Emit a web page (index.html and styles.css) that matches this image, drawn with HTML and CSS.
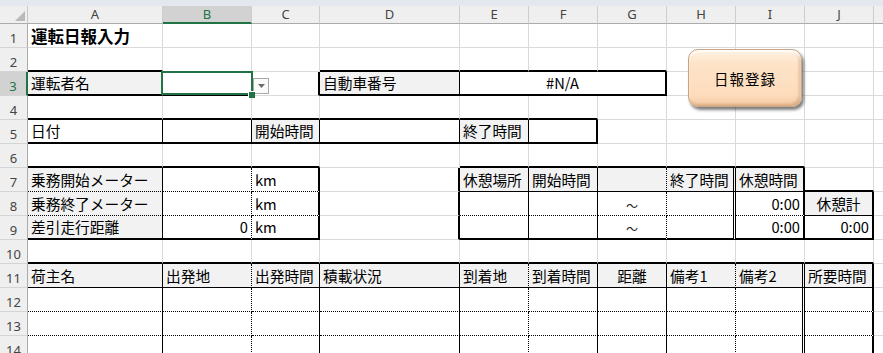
FILE: index.html
```html
<!DOCTYPE html>
<html lang="ja">
<head>
<meta charset="utf-8">
<title>運転日報入力</title>
<link rel="stylesheet" href="styles.css">
</head>
<body>
<div class="app">
  <div class="topbar"></div>
  <div class="sheet">
    <!-- column headers -->
    <div class="corner"><svg width="10" height="10" viewBox="0 0 10 10"><path d="M10 0V10H0Z" fill="#b9b9b9"/></svg></div>
    <div class="ch">A</div><div class="ch sel">B</div><div class="ch">C</div><div class="ch">D</div><div class="ch">E</div><div class="ch">F</div><div class="ch">G</div><div class="ch">H</div><div class="ch">I</div><div class="ch">J</div><div class="ch"></div>

    <!-- row 1 -->
    <div class="rh">1</div>
    <div class="c title">運転日報入力</div><div class="c"></div><div class="c"></div><div class="c"></div><div class="c"></div><div class="c"></div><div class="c"></div><div class="c"></div><div class="c"></div><div class="c"></div><div class="c"></div>

    <!-- row 2 -->
    <div class="rh">2</div>
    <div class="c bt"></div><div class="c"></div><div class="c"></div><div class="c bt"></div><div class="c bt"></div><div class="c bt"></div><div class="c bt"></div><div class="c"></div><div class="c"></div><div class="c"></div><div class="c"></div>

    <!-- row 3 -->
    <div class="rh sel">3</div>
    <div class="c g bt">運転者名</div>
    <div class="c bt active"></div>
    <div class="c rt host"><span class="dropdown"><svg width="7" height="4" viewBox="0 0 7 4"><path d="M0 0H7L3.5 4Z" fill="#6a6a6a"/></svg></span></div>
    <div class="c g rs bt">自動車番号</div>
    <div class="c span3 ctr rt bt">#N/A</div>
    <div class="c"></div><div class="c"></div><div class="c"></div><div class="c"></div>

    <!-- row 4 -->
    <div class="rh">4</div>
    <div class="c bt"></div><div class="c bt"></div><div class="c bt"></div><div class="c bt"></div><div class="c bt"></div><div class="c bt"></div><div class="c"></div><div class="c"></div><div class="c"></div><div class="c"></div><div class="c"></div>

    <!-- row 5 -->
    <div class="rh">5</div>
    <div class="c rs bt">日付</div><div class="c rs bt"></div><div class="c g rs bt">開始時間</div><div class="c rs bt"></div><div class="c g rs bt">終了時間</div><div class="c rt bt"></div><div class="c"></div><div class="c"></div><div class="c"></div><div class="c"></div><div class="c"></div>

    <!-- row 6 -->
    <div class="rh">6</div>
    <div class="c bt"></div><div class="c bt"></div><div class="c bt"></div><div class="c"></div><div class="c bt"></div><div class="c bt"></div><div class="c bt"></div><div class="c bt"></div><div class="c bt"></div><div class="c"></div><div class="c"></div>

    <!-- row 7 -->
    <div class="rh">7</div>
    <div class="c g rs bd">乗務開始メーター</div><div class="c rd bd"></div><div class="c rt bd">km</div><div class="c rt"></div>
    <div class="c g rs bs">休憩場所</div><div class="c g rs bs">開始時間</div><div class="c g rd bs"></div><div class="c g rw bs">終了時間</div><div class="c g rt bs">休憩時間</div><div class="c bt"></div><div class="c"></div>

    <!-- row 8 -->
    <div class="rh">8</div>
    <div class="c g rs bd">乗務終了メーター</div><div class="c rd bd"></div><div class="c rt bd">km</div><div class="c rt"></div>
    <div class="c rs bd"></div><div class="c rs bd"></div><div class="c ctr rd bd tilde">～</div><div class="c rw bd"></div><div class="c num rt bd">0:00</div><div class="c g ctr rt bs">休憩計</div><div class="c"></div>

    <!-- row 9 -->
    <div class="rh">9</div>
    <div class="c g rs bt">差引走行距離</div><div class="c num rd bt">0</div><div class="c rt bt">km</div><div class="c rt"></div>
    <div class="c rs bt"></div><div class="c rs bt"></div><div class="c ctr rd bt tilde">～</div><div class="c rw bt"></div><div class="c num rt bt">0:00</div><div class="c num rt bt">0:00</div><div class="c"></div>

    <!-- row 10 -->
    <div class="rh">10</div>
    <div class="c bt"></div><div class="c bt"></div><div class="c bt"></div><div class="c bt"></div><div class="c bt"></div><div class="c bt"></div><div class="c bt"></div><div class="c bt"></div><div class="c bt"></div><div class="c bt"></div><div class="c"></div>

    <!-- row 11 -->
    <div class="rh">11</div>
    <div class="c g rs bs">荷主名</div><div class="c g rd bs">出発地</div><div class="c g rs bs">出発時間</div><div class="c g rs bs">積載状況</div><div class="c g rd bs">到着地</div><div class="c g rs bs">到着時間</div><div class="c g ctr rs bs">距離</div><div class="c g rd bs">備考1</div><div class="c g rw bs">備考2</div><div class="c g rt bs">所要時間</div><div class="c"></div>

    <!-- row 12 -->
    <div class="rh">12</div>
    <div class="c rs bd"></div><div class="c rd bd"></div><div class="c rs bd"></div><div class="c rs bd"></div><div class="c rd bd"></div><div class="c rs bd"></div><div class="c rs bd"></div><div class="c rd bd"></div><div class="c rw bd"></div><div class="c rt bd"></div><div class="c"></div>

    <!-- row 13 -->
    <div class="rh">13</div>
    <div class="c rs bd"></div><div class="c rd bd"></div><div class="c rs bd"></div><div class="c rs bd"></div><div class="c rd bd"></div><div class="c rs bd"></div><div class="c rs bd"></div><div class="c rd bd"></div><div class="c rw bd"></div><div class="c rt bd"></div><div class="c"></div>

    <!-- row 14 -->
    <div class="rh">14</div>
    <div class="c rs bd"></div><div class="c rd bd"></div><div class="c rs bd"></div><div class="c rs bd"></div><div class="c rd bd"></div><div class="c rs bd"></div><div class="c rs bd"></div><div class="c rd bd"></div><div class="c rw bd"></div><div class="c rt bd"></div><div class="c"></div>
  </div>

  <button class="btn" type="button">日報登録</button>
</div>
</body>
</html>
```

FILE: styles.css
```css
* { box-sizing: border-box; }

html, body {
  margin: 0;
  padding: 0;
  background: #fff;
}

body {
  width: 883px;
  height: 353px;
  overflow: hidden;
  font-family: "Noto Sans CJK JP", "Noto Sans", sans-serif;
  color: #000;
}

.app {
  position: relative;
  width: 883px;
  height: 353px;
  overflow: hidden;
}

.topbar {
  height: 6px;
  background: #e3e8ef;
}

.sheet {
  display: grid;
  grid-template-columns: 28px 135px 89px 68px 140px repeat(7, 69px);
  grid-template-rows: 18px repeat(14, 24px);
  width: 943px;
}

/* headers */
.corner {
  background: #efefef;
  border-right: 1px solid #c8c8c8;
  border-bottom: 1px solid #ababab;
  display: flex;
  align-items: flex-end;
  justify-content: flex-end;
  padding: 0 2px 2px 0;
}

.ch {
  background: #efefef;
  border-right: 1px solid #cdcdcd;
  border-bottom: 1px solid #ababab;
  font: 13px "Noto Sans", "Liberation Sans", sans-serif;
  color: #444;
  display: flex;
  align-items: center;
  justify-content: center;
  line-height: 1;
}

.ch.sel {
  background: #d2d2d2;
  color: #217346;
  border-bottom: 2px solid #217346;
}

.rh {
  background: #efefef;
  border-right: 1px solid #ababab;
  border-bottom: 1px solid #d4d4d4;
  font: 13px "Noto Sans", "Liberation Sans", sans-serif;
  color: #444;
  display: flex;
  align-items: flex-end;
  justify-content: center;
  padding-bottom: 2px;
  line-height: 1;
}

.rh.sel {
  background: #d2d2d2;
  color: #217346;
  border-right: 2px solid #217346;
}

/* cells */
.c {
  border-right: 1px solid #dadada;
  border-bottom: 1px solid #dadada;
  font-size: 14.7px;
  line-height: 1;
  display: flex;
  align-items: center;
  padding: 1px 3px 0;
  white-space: nowrap;
  overflow: visible;
}

.title {
  font-size: 16.5px;
  font-weight: 700;
}

.g { background: #f2f2f2; }
.num { justify-content: flex-end; padding-right: 3px; }
.ctr { justify-content: center; }
.span3 { grid-column: span 3; }
.tilde { font-size: 12px; color: #222; padding-top: 4px; }

/* Excel borders */
.rs { border-right: 1px solid #000; }
.rd { border-right: 1px dotted #000; }
.rt { border-right: 2px solid #000; }
.rw { border-right: 3px double #000; }
.bs { border-bottom: 1px solid #000; }
.bd { border-bottom: 1px dotted #000; }
.bt { border-bottom: 2px solid #000; }

/* active cell */
.active { position: relative; }
.active::after {
  content: "";
  position: absolute;
  left: -2px;
  top: -1px;
  right: -2px;
  bottom: -1px;
  border: 2px solid #217346;
}
.active::before {
  content: "";
  position: absolute;
  right: -4px;
  bottom: -4px;
  width: 6px;
  height: 6px;
  background: #217346;
  border-left: 1px solid #fff;
  border-top: 1px solid #fff;
  z-index: 2;
}

.host { position: relative; }
.dropdown {
  position: absolute;
  left: 1px;
  top: 6px;
  width: 16px;
  height: 16px;
  border: 1px solid #a9a9a9;
  background: #fafafa;
  display: flex;
  align-items: center;
  justify-content: center;
}

/* floating shape button */
.btn {
  position: absolute;
  left: 688px;
  top: 49px;
  width: 114px;
  height: 58px;
  border: 1px solid #c9a385;
  border-radius: 10px;
  background: linear-gradient(#fff2e3 0%, #fee3c8 25%, #fddcbc 80%, #f5caa3 100%);
  box-shadow: 2px 3px 3px rgba(0, 0, 0, 0.5),
              inset 0 2px 2px rgba(255, 255, 255, 0.9),
              inset -2px -2px 3px rgba(170, 110, 60, 0.35);
  font-family: "Noto Sans CJK JP", sans-serif;
  font-size: 14.5px;
  letter-spacing: 1px;
  color: #000;
  padding: 0;
}
```
